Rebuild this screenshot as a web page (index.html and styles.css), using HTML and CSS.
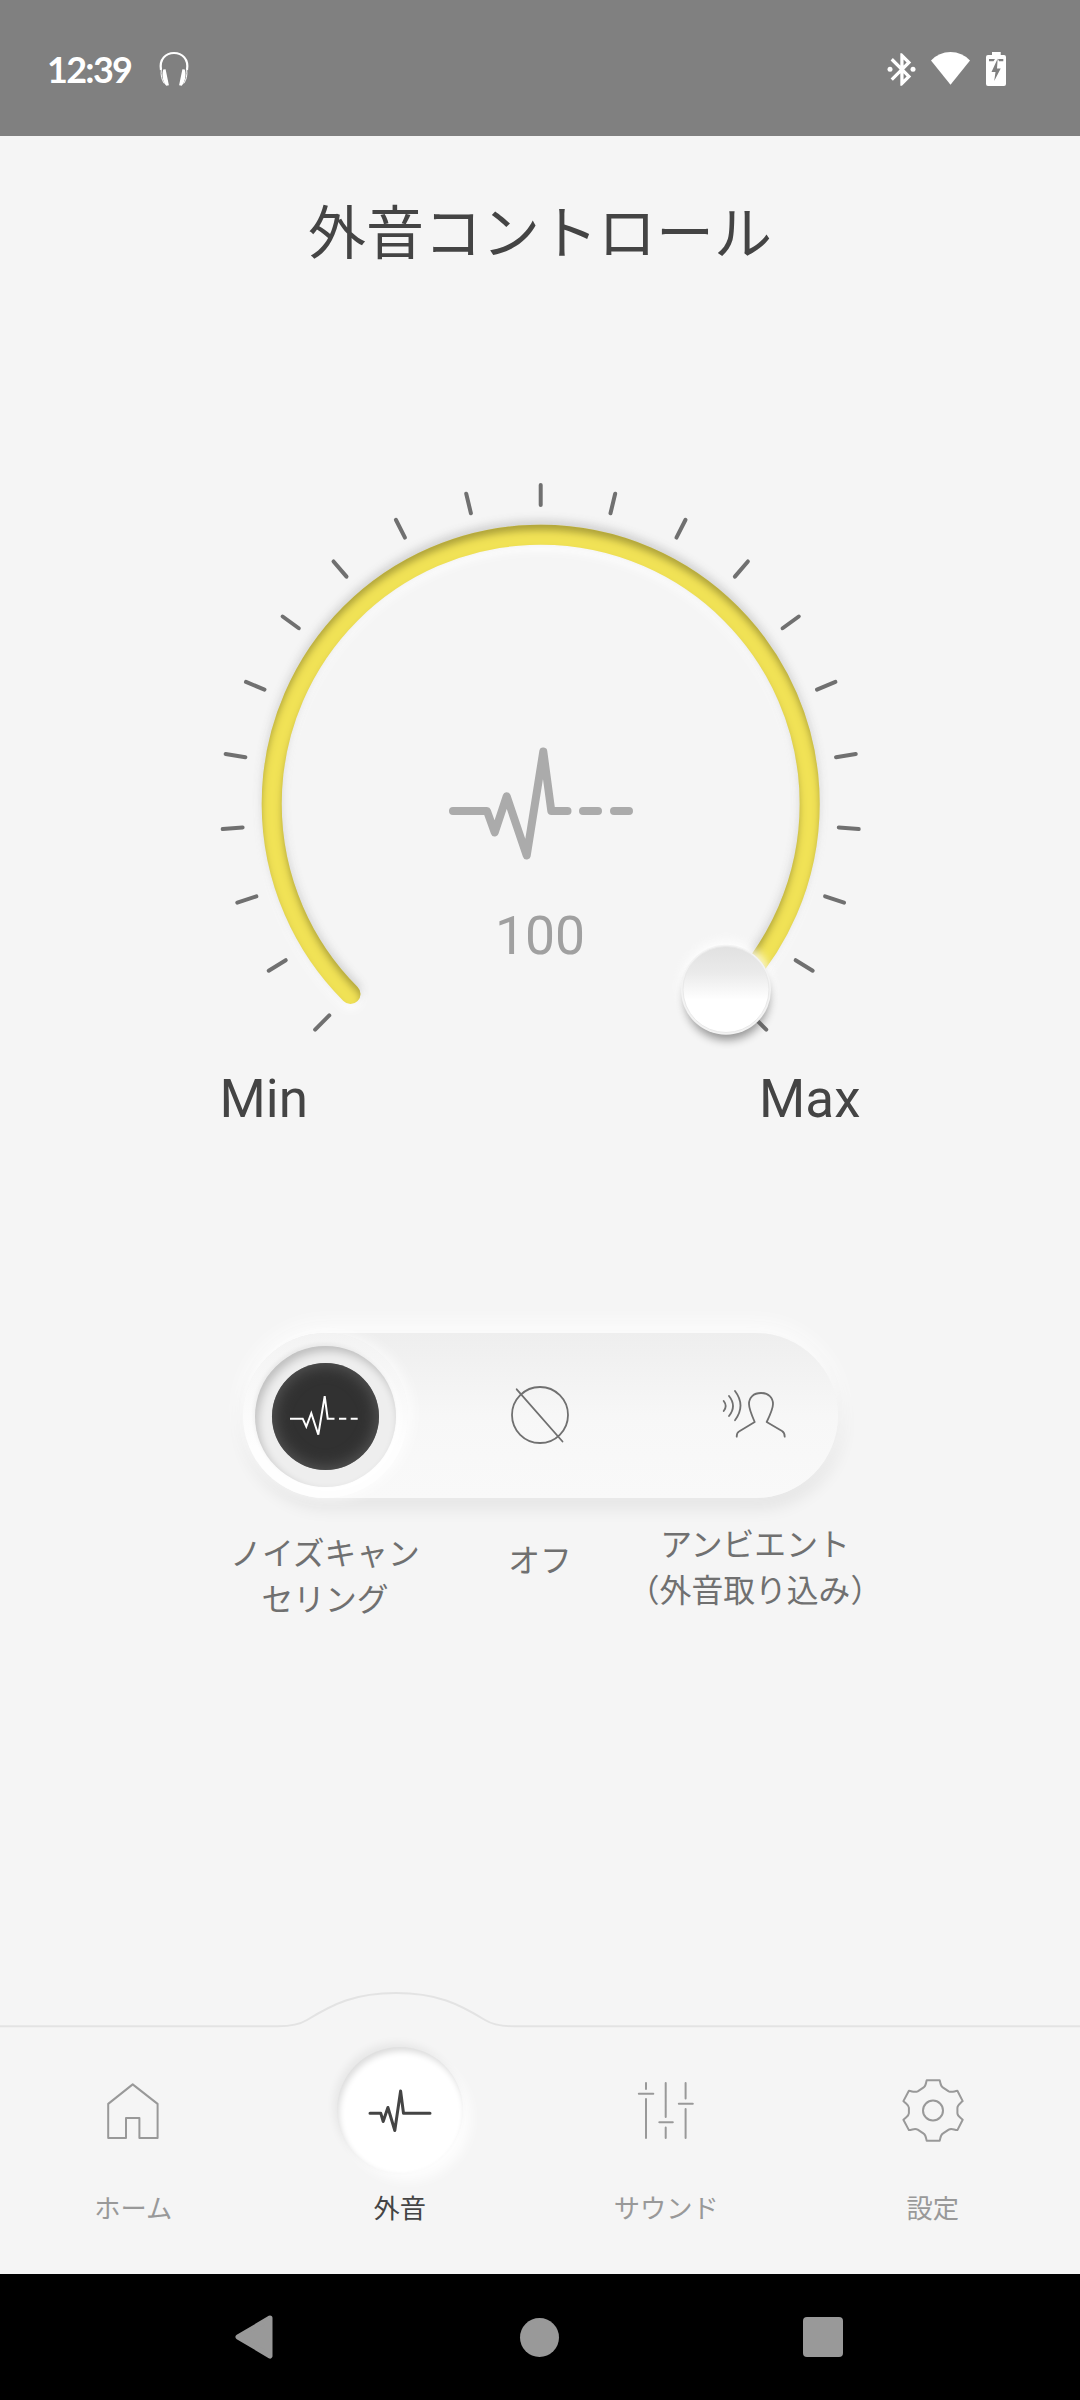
FILE: index.html
```html
<!DOCTYPE html>
<html lang="ja">
<head>
<meta charset="utf-8">
<title>外音コントロール</title>
<link rel="stylesheet" href="styles.css">
</head>
<body>
<header class="status">
  <span class="time">12:39</span>
  <svg class="headphones" width="32" height="38" viewBox="158 50 32 38">
    <path d="M161 70C159 59 166 53 174 53s15 6 13 17" fill="none" stroke="#fff" stroke-width="2.2"/>
    <path d="M163.2 69.5l2.4-.3 3.3 16-2.6.6c-2.8-3-5-10-3.100-16.300zM184.800 69.500l-2.400-.3-3.300 16 2.600.6c2.800-3 5-10 3.100-16.300z" fill="#fff"/>
    <path d="M161.300 70c-.8 5 .5 10 3 13.500M186.700 70c.8 5-.5 10-3 13.500" fill="none" stroke="#fff" stroke-width="1"/>
  </svg>
  <svg class="indicators" width="128" height="38" viewBox="882 49 128 38" fill="#fff">
    <g transform="translate(882.500 49) scale(1.620)">
      <path d="M17.710 7.710L12 2h-1v7.590L6.410 5 5 6.410 10.590 12 5 17.590 6.410 19 11 14.410V22h1l5.710-5.710-4.300-4.290zM13 5.830l1.880 1.880L13 9.590zM14.880 16.290L13 18.170v-3.760z"/>
    </g>
    <circle cx="890" cy="68.300" r="2.500"/><circle cx="913" cy="68.300" r="2.500"/>
    <path d="M950.500 83.700L931 59.500Q939 51 950.500 51T970 59.500z"/>
    <path d="M992 51h8.700v3h3.300a2 2 0 0 1 2 2v27a2 2 0 0 1-2 2h-16a2 2 0 0 1-2-2V56a2 2 0 0 1 2-2h4z"/>
    <path d="M989 58h6l-1.500 2.300H989zM998 58h5.300v2.300H999zM997.700 57.500l-6.200 13.500h4l-1.300 9 6.500-12.500H997z" fill="#808080"/>
  </svg>
</header>

<main class="screen">
  <h1 class="title">外音コントロール</h1>

  <svg class="dial" width="680" height="600" viewBox="200 460 680 600">
    <defs>
      <path id="arc" d="M350.500 994A269 269 0 1 1 730.900 994" fill="none" stroke-width="20" stroke-linecap="round"/>
      <path id="tick" d="M540.700 485V505"/>
      <filter id="soft" x="-10%" y="-10%" width="120%" height="120%"><feGaussianBlur stdDeviation="5"/></filter>
      <filter id="groove" x="-10%" y="-10%" width="120%" height="120%">
        <feOffset in="SourceAlpha" dy="5.500"/>
        <feGaussianBlur stdDeviation="3.500" result="b"/>
        <feFlood flood-color="#6d6420" flood-opacity=".62"/>
        <feComposite in2="b" operator="out"/>
        <feComposite in2="SourceAlpha" operator="in" result="shade"/>
        <feMerge><feMergeNode in="SourceGraphic"/><feMergeNode in="shade"/></feMerge>
      </filter>
      <linearGradient id="knob" x1="0" y1="0" x2="0" y2="1">
        <stop offset="0" stop-color="#e1e1e1"/><stop offset=".3" stop-color="#eaeaea"/><stop offset=".62" stop-color="#fff"/>
      </linearGradient>
    </defs>
    <g stroke="#707070" stroke-width="4" stroke-linecap="round">
      <use href="#tick" transform="rotate(-135 540.700 804)"/>
      <use href="#tick" transform="rotate(-121.500 540.700 804)"/>
      <use href="#tick" transform="rotate(-108 540.700 804)"/>
      <use href="#tick" transform="rotate(-94.500 540.700 804)"/>
      <use href="#tick" transform="rotate(-81 540.700 804)"/>
      <use href="#tick" transform="rotate(-67.500 540.700 804)"/>
      <use href="#tick" transform="rotate(-54 540.700 804)"/>
      <use href="#tick" transform="rotate(-40.500 540.700 804)"/>
      <use href="#tick" transform="rotate(-27 540.700 804)"/>
      <use href="#tick" transform="rotate(-13.500 540.700 804)"/>
      <use href="#tick"/>
      <use href="#tick" transform="rotate(13.500 540.700 804)"/>
      <use href="#tick" transform="rotate(27 540.700 804)"/>
      <use href="#tick" transform="rotate(40.500 540.700 804)"/>
      <use href="#tick" transform="rotate(54 540.700 804)"/>
      <use href="#tick" transform="rotate(67.500 540.700 804)"/>
      <use href="#tick" transform="rotate(81 540.700 804)"/>
      <use href="#tick" transform="rotate(94.500 540.700 804)"/>
      <use href="#tick" transform="rotate(108 540.700 804)"/>
      <use href="#tick" transform="rotate(121.500 540.700 804)"/>
      <use href="#tick" transform="rotate(135 540.700 804)"/>
    </g>
    <g filter="url(#soft)"><use href="#arc" stroke="#fff" stroke-width="34" opacity=".5"/></g>
    <g filter="url(#soft)"><use href="#arc" y="5" stroke="#fff"/></g>
    <g filter="url(#soft)" opacity=".26"><use href="#arc" y="-4" stroke="#555"/></g>
    <g filter="url(#groove)"><use href="#arc" stroke="#f1e257"/></g>
    <circle cx="726" cy="986" r="46" fill="#fff" opacity=".8" filter="url(#soft)"/>
    <circle cx="727" cy="998" r="42" fill="#000" opacity=".4" filter="url(#soft)"/>
    <circle cx="726" cy="989.700" r="45" fill="#f3f3f3"/>
    <circle cx="726" cy="989.500" r="43" fill="url(#knob)" stroke="#e9e9e9" stroke-width="1"/>
    <path d="M453 811H487L494.700 832.500L506.700 796.300L526.700 855.500L543.300 751.500L551.300 811H567.500M583 811H598M614 811H629" fill="none" stroke="#ababab" stroke-width="8" stroke-linecap="round" stroke-linejoin="round"/>
    <text class="value" x="540" y="954" text-anchor="middle">100</text>
  </svg>

  <div class="range"><span>Min</span><span>Max</span></div>

  <div class="modes">
    <div class="mode current">
      <div class="ring"><div class="disc">
        <svg width="72" height="44" viewBox="289 1394.300 72 44" fill="none" stroke="#fff" stroke-width="2">
          <path d="M290 1418H302.700L306.300 1426L311.300 1412.500L318.300 1434L324.700 1395.500L327.700 1418H334.500M339 1418H346.300M350.700 1418H357.700"/>
        </svg>
      </div></div>
    </div>
    <div class="mode">
      <svg class="off" width="60" height="60" viewBox="510 1385 60 60" fill="none" stroke="#707070" stroke-width="1.800" stroke-linecap="round">
        <circle cx="540" cy="1415" r="28"/><path d="M516.700 1389.300L562.500 1441.500"/>
      </svg>
    </div>
    <div class="mode">
      <svg class="ambient" width="66" height="50" viewBox="722 1390 66 50" fill="none" stroke="#707070" stroke-width="1.800" stroke-linecap="round" stroke-linejoin="round">
        <path d="M736.700 1436.700C736.700 1434 737 1432.500 739 1431.500L754.700 1422Q749 1409 749 1404C749 1397.500 753.500 1393 761 1393S773 1397.500 773 1404Q773 1409 766.700 1422L782 1431C784.500 1432.500 784.700 1434.500 784.700 1436.700M723.700 1401Q727.700 1406 723.700 1411M729 1396Q737 1406 729 1416M735 1391Q746 1405.500 735 1420.300"/>
      </svg>
    </div>
  </div>

  <div class="mode-names">
    <p>ノイズキャン<br>セリング</p>
    <p class="name-off">オフ</p>
    <p class="name-ambient">アンビエント<br>（外音取り込み）</p>
  </div>
</main>

<footer class="tabs">
  <svg class="edge" width="1080" height="44" viewBox="0 1986 1080 44">
    <path d="M0 2026.200H278C290 2026.200 299 2025 307 2020C333 2004 355 1993 396 1993S459 2004 485 2020C493 2025 502 2026.200 514 2026.200H1080" fill="none" stroke="#e3e3e3" stroke-width="2"/>
  </svg>
  <nav class="tab-row">
    <a class="tab">
      <span class="tab-icon"><svg width="56" height="60" viewBox="105 2080.300 56 60" fill="none" stroke="#999" stroke-width="2" stroke-linejoin="round"><path d="M108.200 2104.200L132.700 2084.700L157.600 2104.200V2138.300H139.400V2118.300H126V2138.300H108.200z"/></svg></span>
      <span>ホーム</span>
    </a>
    <a class="tab active">
      <span class="tab-icon"><svg width="66" height="46" viewBox="366.500 2087 66 46" fill="none" stroke="#444" stroke-width="3" stroke-linecap="round" stroke-linejoin="round"><path d="M369.500 2113.300H380.300L382.700 2121.500L387.400 2107.500L394.300 2130.500L400.100 2091L403 2113.300H429.500"/></svg></span>
      <span>外音</span>
    </a>
    <a class="tab">
      <span class="tab-icon"><svg width="60" height="60" viewBox="636.700 2080 60 60" fill="none" stroke="#999" stroke-width="2" stroke-linecap="round"><path d="M646.700 2083V2089M639.500 2093.700H654M646.700 2099V2138M666.400 2083V2117M660 2122.300H673.500M666.400 2127.500V2138M686.300 2083V2098.500M679.500 2103.700H693.500M686.300 2109V2138"/></svg></span>
      <span>サウンド</span>
    </a>
    <a class="tab">
      <span class="tab-icon"><svg width="64" height="66" viewBox="901.300 2077.200 64 66" fill="none" stroke="#999" stroke-width="2" stroke-linejoin="round"><circle cx="933.300" cy="2110.700" r="10"/><path d="M927 2080.500H940C941 2084 941 2086.500 943 2087.500L949 2091.500C952 2093 954 2091.500 957.700 2091L963 2101.300C959 2105 957.700 2105.500 957.700 2108V2113.500C957.700 2116 959 2116.500 963 2120L957.700 2130.300C954 2130 952 2128.300 949 2129.800L943 2133.800C941 2135 941 2137 940 2141H927C926 2137 926 2135 924 2133.800L918 2129.800C915 2128.300 913 2130 909.200 2130.300L903.700 2120C907.500 2116.500 909.200 2116 909.200 2113.500V2108C909.200 2105.500 907.500 2105 903.700 2101.300L909.200 2091C913 2091.500 915 2093 918 2091.500L924 2087.500C926 2086.500 926 2084 927 2080.500z"/></svg></span>
      <span>設定</span>
    </a>
  </nav>
</footer>

<div class="system-nav">
  <svg width="44" height="46" viewBox="0 0 44 46"><path d="M37 4L5 23L37 42z" fill="#999" stroke="#999" stroke-width="5" stroke-linejoin="round" transform="translate(-2 0)"/></svg>
  <span class="home-key"></span>
  <span class="recent-key"></span>
</div>
</body>
</html>
```
FILE: styles.css
```css
* { box-sizing: border-box; }

body {
  margin: 0;
  width: 1080px;
  height: 2400px;
  display: flex;
  flex-direction: column;
  overflow: hidden;
  background: #f5f5f5;
  color: #444;
  font-family: "Noto Sans CJK JP", sans-serif;
}

svg { display: block; flex: none; }

.status {
  flex: none;
  display: flex;
  align-items: center;
  height: 136px;
  padding: 1px 70px 0 47px;
  background: #808080;
}
.time {
  width: 111px;
  color: #fff;
  font: 700 36px/40px Lato, sans-serif;
  letter-spacing: -1.7px;
}
.indicators { margin-left: auto; }

.screen {
  flex: none;
  height: 1850px;
  display: flex;
  flex-direction: column;
  align-items: center;
}
.title {
  margin: 0;
  height: 324px;
  padding-top: 51px;
  font-size: 58px;
  line-height: 84px;
  font-weight: 400;
}
.dial { overflow: visible; }
.value {
  font: 400 53.5px Roboto, sans-serif;
  fill: #a0a0a0;
}
.range {
  display: flex;
  justify-content: space-between;
  width: 641px;
  margin-top: 8px;
  font: 400 53px/62px Roboto, sans-serif;
}

.modes {
  display: grid;
  grid-template-columns: 165px 265px 165px;
  width: 595px;
  height: 165px;
  margin-top: 203px;
  border-radius: 83px;
  background: linear-gradient(#eeeeee, #f7f7f7 50%, #f9f9f9);
  box-shadow: 0 -8px 22px #fdfdfd, 2px 9px 18px rgba(0, 0, 0, .085);
}
.mode {
  display: flex;
  align-items: center;
  justify-content: center;
}
.off, .ambient { margin-bottom: 2px; }
.current {
  border-radius: 50%;
  background: linear-gradient(#f3f3f3, #fefefe 70%);
  box-shadow: 4px 0 14px rgba(255, 255, 255, .75);
}
.ring {
  display: flex;
  align-items: center;
  justify-content: center;
  width: 141px;
  height: 141px;
  margin-top: 2px;
  border-radius: 50%;
  background: #eeeeee;
  box-shadow: inset 3px 5px 8px rgba(0, 0, 0, .2), -1px -2px 4px rgba(0, 0, 0, .06), 3px 4px 10px #fff;
}
.disc {
  display: flex;
  align-items: center;
  justify-content: center;
  width: 107px;
  height: 107px;
  border-radius: 50%;
  background: #313131;
  box-shadow: inset 0 0 16px 2px #575757;
}

.mode-names {
  display: grid;
  grid-template-columns: repeat(3, 215px);
  margin-top: 30px;
  color: #707070;
  font-size: 31.8px;
  line-height: 46px;
}
.mode-names p {
  margin: 0;
  display: flex;
  justify-content: center;
  text-align: center;
  white-space: nowrap;
}
.mode-names .name-off { padding-top: 7px; }
.mode-names .name-ambient { margin-top: -9px; }

.tabs {
  flex: none;
  height: 288px;
}
.tab-row {
  display: grid;
  grid-template-columns: repeat(4, 1fr);
  padding: 17px 14px 0 0;
}
.tab {
  display: flex;
  flex-direction: column;
  align-items: center;
  color: #999;
  font-size: 26.25px;
  line-height: 38px;
}
.tab-icon {
  display: flex;
  align-items: center;
  justify-content: center;
  width: 126px;
  height: 126px;
  margin-bottom: 15px;
  border-radius: 50%;
}
.active { color: #444; }
.active .tab-icon {
  background: #fff;
  box-shadow: inset 2px 4px 6px rgba(0, 0, 0, .14), -3px -4px 8px rgba(0, 0, 0, .06), 8px 8px 12px rgba(255, 255, 255, .8);
}

.system-nav {
  flex: none;
  display: grid;
  grid-template-columns: repeat(3, 1fr);
  align-items: center;
  justify-items: center;
  height: 126px;
  padding: 0 115px;
  background: #000;
}
.home-key {
  width: 39px;
  height: 39px;
  border-radius: 50%;
  background: #999;
}
.recent-key {
  width: 40px;
  height: 40px;
  border-radius: 4px;
  background: #999;
}
```
